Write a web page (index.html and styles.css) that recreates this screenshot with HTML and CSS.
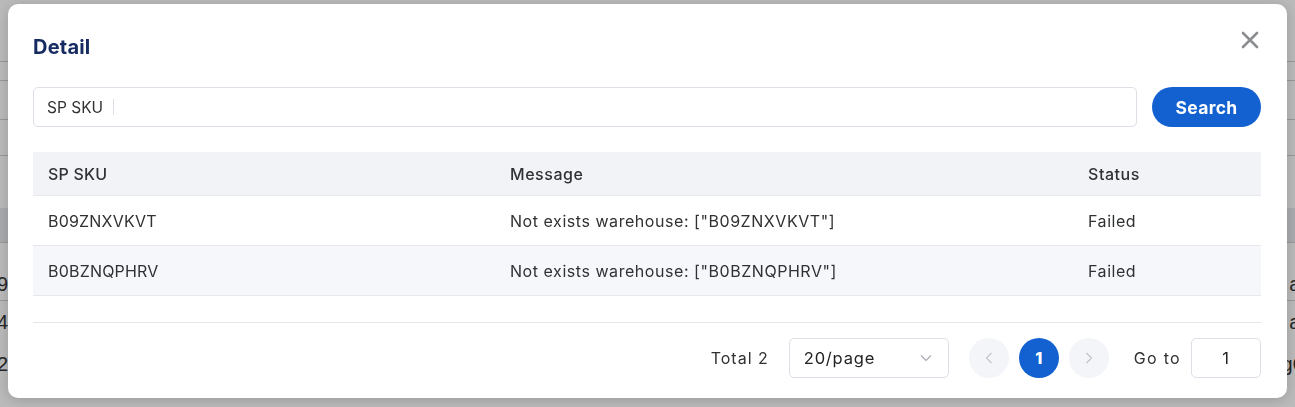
FILE: index.html
```html
<!DOCTYPE html>
<html lang="en">
<head>
<meta charset="utf-8">
<title>Detail</title>
<link rel="stylesheet" href="styles.css">
</head>
<body>
<div class="page">
  <div class="bg-row h61"></div>
  <div class="bg-row h19 line"></div>
  <div class="bg-row h39 line"></div>
  <div class="bg-row h36 line"></div>
  <div class="bg-row h42 line"></div>
  <div class="bg-row h11"></div>
  <div class="bg-row band"></div>
  <div class="bg-row data line"><span class="frag-l">9</span><span class="frag-r">a<b>r</b></span></div>
  <div class="bg-row data2 line"><span class="frag-l">4</span><span class="frag-r">a<b>r</b></span></div>
  <div class="bg-row data2"><span class="frag-l">2t</span><span class="frag-r">gC</span></div>
</div>

<div class="overlay">
  <div class="dialog">
    <div class="dialog-head">
      <h2 class="title">Detail</h2>
      <button class="close" aria-label="Close">
        <svg width="18" height="18" viewBox="0 0 18 18"><path d="M2 2L16 16M16 2L2 16" stroke="#8b8d91" stroke-width="2.6" stroke-linecap="round"/></svg>
      </button>
    </div>

    <div class="search-bar">
      <div class="field">
        <span class="field-label">SP SKU</span>
        <span class="field-sep"></span>
        <input class="field-input" type="text">
      </div>
      <button class="btn-search">Search</button>
    </div>

    <div class="table">
      <div class="tr th">
        <div class="c1 inter">SP SKU</div>
        <div class="c2">Message</div>
        <div class="c3">Status</div>
      </div>
      <div class="tr">
        <div class="c1 inter">B09ZNXVKVT</div>
        <div class="c2">Not exists warehouse: ["B09ZNXVKVT"]</div>
        <div class="c3">Failed</div>
      </div>
      <div class="tr striped">
        <div class="c1 inter">B0BZNQPHRV</div>
        <div class="c2">Not exists warehouse: ["B0BZNQPHRV"]</div>
        <div class="c3">Failed</div>
      </div>
    </div>

    <div class="footer">
      <span class="total">Total 2</span>
      <div class="select">
        <span>20/page</span>
        <svg width="12" height="8" viewBox="0 0 12 8"><path d="M1 1.5L6 6.5L11 1.5" fill="none" stroke="#a8abb2" stroke-width="1.2"/></svg>
      </div>
      <div class="pager">
        <button class="pg-btn">
          <svg width="8" height="12" viewBox="0 0 8 12"><path d="M6.5 1L1.5 6L6.5 11" fill="none" stroke="#c0c4cc" stroke-width="1.2"/></svg>
        </button>
        <button class="pg-btn active">1</button>
        <button class="pg-btn">
          <svg width="8" height="12" viewBox="0 0 8 12"><path d="M1.5 1L6.5 6L1.5 11" fill="none" stroke="#c0c4cc" stroke-width="1.2"/></svg>
        </button>
      </div>
      <span class="goto">Go to</span>
      <div class="goto-box">1</div>
    </div>
  </div>
</div>
</body>
</html>
```

FILE: styles.css
```css
* { box-sizing: border-box; }
html, body { margin: 0; padding: 0; }
body {
  width: 1295px;
  height: 407px;
  overflow: hidden;
  background: #ffffff;
  font-family: "Inter", "Noto Sans", sans-serif;
  color: #303133;
}

/* background page */
.page { width: 1295px; }
.bg-row {
  display: flex;
  justify-content: space-between;
  align-items: center;
  font-family: "Liberation Sans", sans-serif;
  font-size: 20px;
  color: #333;
}
.bg-row.line { border-top: 1px solid #d0d0d0; }
.h61 { height: 61px; }
.h19 { height: 19px; }
.h39 { height: 39px; }
.h36 { height: 36px; }
.h42 { height: 42px; }
.h11 { height: 11px; }
.band { height: 34px; background: #e9eaee; }
.data { height: 58px; padding-top: 25px; }
.data2 { height: 43px; }
.frag-l { margin-left: -3px; }
.frag-r { margin-right: -12px; }
.frag-r b { font-weight: normal; color: #c06a00; }

/* overlay & dialog */
.overlay {
  position: fixed;
  inset: 0;
  background: rgba(0, 0, 0, 0.27);
  padding: 4px 8px 0 8px;
}
.dialog {
  width: 1279px;
  height: 394px;
  background: #fff;
  border-radius: 10px;
  box-shadow: 0 2px 14px rgba(0, 0, 0, 0.18);
  padding: 31px 26px 0 25px;
  font-family: "Inter", sans-serif;
}
.dialog-head {
  display: flex;
  justify-content: space-between;
  align-items: flex-start;
  height: 52px;
}
.title {
  margin: 0;
  font-size: 20px;
  line-height: 24px;
  font-weight: 700;
  color: #172b63;
  letter-spacing: 0.2px;
}
.close {
  border: 0;
  background: none;
  padding: 0;
  margin: -4px 2px 0 0;
  width: 18px;
  height: 18px;
  cursor: pointer;
}
.close svg { display: block; }

.search-bar {
  display: flex;
  gap: 15px;
  height: 40px;
}
.field {
  flex: 1;
  display: flex;
  align-items: center;
  border: 1px solid #dcdfe6;
  border-radius: 5px;
  padding: 0 13px;
}
.field-label {
  font-size: 15.5px;
  color: #303133;
}
.field-sep {
  width: 1px;
  height: 16px;
  background: #dcdfe6;
  margin-left: 10px;
}
.field-input {
  flex: 1;
  border: 0;
  outline: none;
  height: 36px;
  background: transparent;
}
.btn-search {
  width: 109px;
  border: 0;
  border-radius: 20px;
  background: #1361d0;
  color: #fff;
  font-family: "Inter", sans-serif;
  font-weight: 700;
  font-size: 17.5px;
  letter-spacing: 0.3px;
}

.table {
  margin-top: 25px;
  font-size: 16px;
  color: #303133;
  letter-spacing: 0.55px;
}
.tr {
  display: flex;
  align-items: center;
  height: 50px;
  border-bottom: 1px solid #e6e8ec;
}
.tr.th {
  height: 44px;
  background: #f2f3f7;
  font-weight: 500;
}
.tr.striped { background: #f6f7fa; }
.c1 { width: 462px; padding-left: 15px; }
.c2 { width: 578px; padding-left: 15px; }
.c3 { flex: 1; padding-left: 15px; }
.inter { letter-spacing: 0.2px; }

.footer {
  margin-top: 26px;
  border-top: 1px solid #e4e6eb;
  padding-top: 15px;
  display: flex;
  align-items: center;
  justify-content: flex-end;
  font-size: 16px;
  letter-spacing: 0.8px;
  color: #303133;
}
.total { margin-right: 20px; letter-spacing: 1px; }
.select {
  width: 160px;
  height: 40px;
  border: 1px solid #dcdfe6;
  border-radius: 5px;
  display: flex;
  align-items: center;
  justify-content: space-between;
  padding: 0 16px 0 14px;
  font-size: 16.5px;
  color: #222;
}
.pager {
  display: flex;
  gap: 10px;
  margin-left: 20px;
}
.pg-btn {
  width: 40px;
  height: 40px;
  border-radius: 50%;
  border: 0;
  background: #f4f5f9;
  display: flex;
  align-items: center;
  justify-content: center;
  padding: 0;
  font-family: "Inter", sans-serif;
  font-size: 16px;
  font-weight: 800;
}
.pg-btn.active { background: #1361d0; color: #fff; }
.goto { margin-left: 25px; margin-right: 10px; letter-spacing: 1.3px; }
.goto-box {
  width: 70px;
  height: 40px;
  border: 1px solid #dcdfe6;
  border-radius: 5px;
  display: flex;
  align-items: center;
  justify-content: center;
  font-size: 16.5px;
  color: #222;
}
```
